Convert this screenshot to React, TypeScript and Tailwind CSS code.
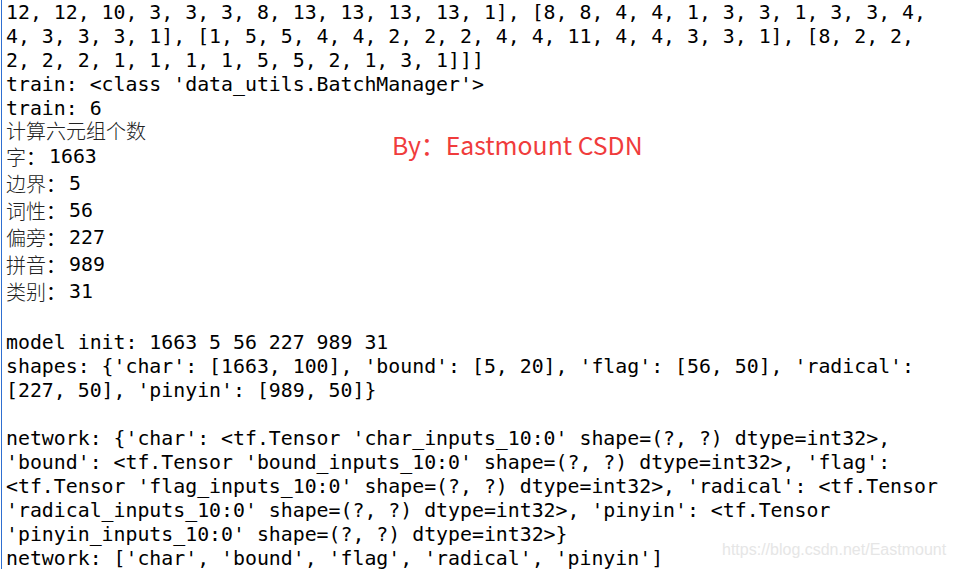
const mono = "font-['DejaVu_Sans_Mono',monospace]";

type Line =
  | { kind: "code"; text: string }
  | { kind: "title"; text: string }
  | { kind: "stat"; label: string; value: string }
  | { kind: "blank" };

const lines: Line[] = [
  { kind: "code", text: "12, 12, 10, 3, 3, 3, 8, 13, 13, 13, 13, 1], [8, 8, 4, 4, 1, 3, 3, 1, 3, 3, 4," },
  { kind: "code", text: "4, 3, 3, 3, 1], [1, 5, 5, 4, 4, 2, 2, 2, 4, 4, 11, 4, 4, 3, 3, 1], [8, 2, 2," },
  { kind: "code", text: "2, 2, 2, 1, 1, 1, 1, 5, 5, 2, 1, 3, 1]]]" },
  { kind: "code", text: "train: <class 'data_utils.BatchManager'>" },
  { kind: "code", text: "train: 6" },
  { kind: "title", text: "计算六元组个数" },
  { kind: "stat", label: "字", value: "1663" },
  { kind: "stat", label: "边界", value: "5" },
  { kind: "stat", label: "词性", value: "56" },
  { kind: "stat", label: "偏旁", value: "227" },
  { kind: "stat", label: "拼音", value: "989" },
  { kind: "stat", label: "类别", value: "31" },
  { kind: "blank" },
  { kind: "code", text: "model init: 1663 5 56 227 989 31" },
  { kind: "code", text: "shapes: {'char': [1663, 100], 'bound': [5, 20], 'flag': [56, 50], 'radical':" },
  { kind: "code", text: "[227, 50], 'pinyin': [989, 50]}" },
  { kind: "blank" },
  { kind: "code", text: "network: {'char': <tf.Tensor 'char_inputs_10:0' shape=(?, ?) dtype=int32>," },
  { kind: "code", text: "'bound': <tf.Tensor 'bound_inputs_10:0' shape=(?, ?) dtype=int32>, 'flag':" },
  { kind: "code", text: "<tf.Tensor 'flag_inputs_10:0' shape=(?, ?) dtype=int32>, 'radical': <tf.Tensor" },
  { kind: "code", text: "'radical_inputs_10:0' shape=(?, ?) dtype=int32>, 'pinyin': <tf.Tensor" },
  { kind: "code", text: "'pinyin_inputs_10:0' shape=(?, ?) dtype=int32>}" },
  { kind: "code", text: "network: ['char', 'bound', 'flag', 'radical', 'pinyin']" },
];

function ConsoleLine({ line }: { line: Line }) {
  if (line.kind === "blank") return <div className="h-[24px]" />;
  if (line.kind === "title")
    return (
      <div className="h-[24px] leading-[22px] text-[20px] text-[#222] font-light font-['Noto_Sans_CJK_SC',sans-serif] whitespace-pre">
        {line.text}
      </div>
    );
  if (line.kind === "stat")
    return (
      <div className="h-[27px] leading-[25px] text-[20px] whitespace-pre flex">
        <span className="font-light text-[#222] font-['Noto_Sans_CJK_SC',sans-serif]">{line.label}</span>
        <span className="text-black font-['Noto_Sans_CJK_SC',sans-serif]">：</span>
        <span className={`${mono} ml-[3px] text-[19.85px] text-black`}>{line.value}</span>
      </div>
    );
  return (
    <div className={`h-[24px] pt-px leading-[23px] text-[19.85px] text-black whitespace-pre ${mono}`}>
      {line.text}
    </div>
  );
}

export default function App() {
  return (
    <div className="relative w-[954px] h-[569px] overflow-hidden bg-white">
      <div className="ml-px h-full border-l border-[#2f6fd0] pl-[4px]">
        {lines.map((line, i) => (
          <ConsoleLine key={i} line={line} />
        ))}
      </div>

      {/* watermarks */}
      <div className="absolute left-[392px] top-[128px] text-[24.8px] leading-[32px] text-[#f03c3c] font-['Noto_Sans_CJK_SC',sans-serif] whitespace-pre">
        By：Eastmount CSDN
      </div>
      <div className="absolute left-[722px] top-[540px] text-[16px] leading-[20px] text-[#e6e6e6] font-['Liberation_Sans',sans-serif] whitespace-pre">
        https://blog.csdn.net/Eastmount
      </div>
    </div>
  );
}
